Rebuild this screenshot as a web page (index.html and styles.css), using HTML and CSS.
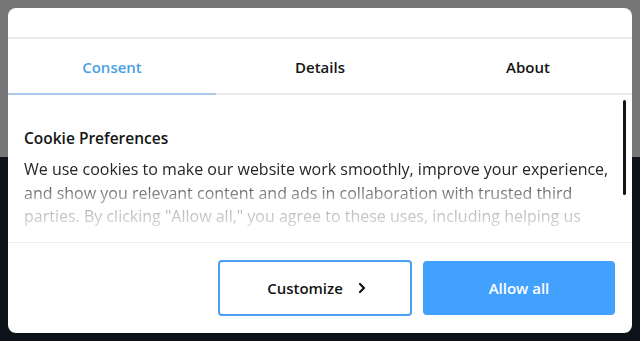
FILE: index.html
```html
<!DOCTYPE html>
<html lang="en">
<head>
<meta charset="utf-8">
<title>Cookie Preferences</title>
<link rel="stylesheet" href="styles.css">
</head>
<body>
<div class="backdrop">
  <div class="modal">
    <div class="modal-top"></div>
    <div class="tabs">
      <div class="tab active">Consent</div>
      <div class="tab">Details</div>
      <div class="tab">About</div>
    </div>
    <div class="content">
      <h2 class="title">Cookie Preferences</h2>
      <p class="text">We use cookies to make our website work smoothly, improve your experience, and show you relevant content and ads in collaboration with trusted third parties. By clicking "Allow all," you agree to these uses, including helping us</p>
      <div class="scrollbar"></div>
    </div>
    <div class="footer">
      <button class="btn btn-outline">Customize
        <svg class="chev" width="10" height="12" viewBox="0 0 10 12"><path d="M3 2 L7 6 L3 10" fill="none" stroke="#141414" stroke-width="2.2" stroke-linecap="round" stroke-linejoin="round"/></svg>
      </button>
      <button class="btn btn-primary">Allow all</button>
    </div>
  </div>
</div>
</body>
</html>
```
FILE: styles.css
```css
* { box-sizing: border-box; }
html, body { margin: 0; padding: 0; }
body {
  width: 640px;
  height: 341px;
  overflow: hidden;
  font-family: "Open Sans", "Noto Sans", sans-serif;
  background: linear-gradient(to bottom, #767676 0, #767676 157px, #0b121a 157px, #0b121a 100%);
}
.backdrop { padding: 8px; }
.modal {
  width: 624px;
  height: 325px;
  background: #fff;
  border-radius: 8px;
  display: flex;
  flex-direction: column;
  overflow: hidden;
}
.modal-top {
  height: 31px;
  border-bottom: 2px solid #ececec;
  flex: none;
}
.tabs {
  display: flex;
  height: 56px;
  flex: none;
  border-bottom: 2px solid #ececec;
}
.tab {
  flex: 1;
  display: flex;
  align-items: center;
  justify-content: center;
  font-size: 15px;
  font-weight: 600;
  color: #141414;
  position: relative;
  padding-top: 2px;
}
.tab.active { color: #4a9fe6; }
.tab.active::after {
  content: "";
  position: absolute;
  left: 0; right: 0; bottom: -2px;
  height: 2px;
  background: #a9cbe9;
}
.content {
  flex: 1;
  position: relative;
  padding: 33px 20px 0 16px;
  overflow: hidden;
  border-bottom: 1px solid #eeeeee;
}
.title {
  margin: 0;
  font-size: 15.5px;
  font-weight: 600;
  color: #141414;
  line-height: 20px;
}
.text {
  margin: 10px 0 0;
  font-size: 16px;
  line-height: 23.5px;
  color: #262626;
  -webkit-mask-image: linear-gradient(to bottom, #000 0, #000 22px, rgba(0,0,0,0.45) 40px, rgba(0,0,0,0.16) 70px, rgba(0,0,0,0) 85px);
  mask-image: linear-gradient(to bottom, #000 0, #000 22px, rgba(0,0,0,0.45) 40px, rgba(0,0,0,0.16) 70px, rgba(0,0,0,0) 85px);
}
.scrollbar {
  position: absolute;
  right: 6px;
  top: 5px;
  width: 3px;
  height: 95px;
  background: #151515;
  border-radius: 2px;
}
.footer {
  height: 90px;
  flex: none;
  display: flex;
  justify-content: flex-end;
  align-items: center;
  gap: 11px;
  padding: 0 17px 0 0;
}
.btn {
  font-family: "Open Sans", "Noto Sans", sans-serif;
  font-size: 15px;
  font-weight: 600;
  border-radius: 4px;
  cursor: pointer;
  display: flex;
  align-items: center;
  justify-content: center;
}
.btn-outline {
  width: 194px;
  height: 56px;
  background: #fff;
  border: 2px solid #4d9ff2;
  color: #141414;
  gap: 14px;
  padding-left: 10px;
}
.btn-primary {
  width: 192px;
  height: 54px;
  background: #42a1ff;
  border: none;
  color: #fff;
}
.chev { display: block; }
```
